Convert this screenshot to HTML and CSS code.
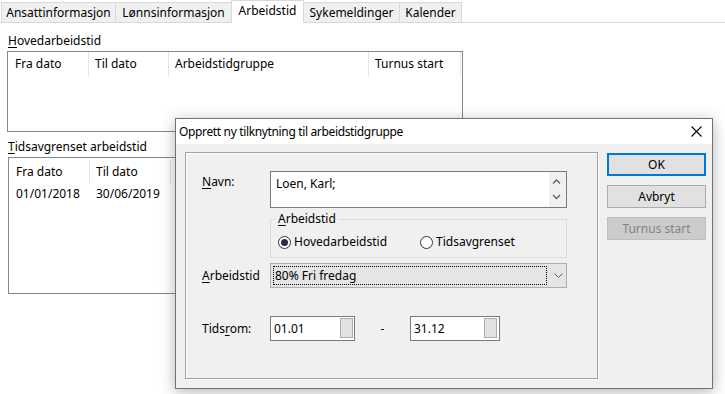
FILE: index.html
```html
<!DOCTYPE html>
<html lang="no">
<head>
  <meta charset="UTF-8">
  <title>Arbeidstid</title>
  <link rel="stylesheet" href="styles.css">
</head>
<body>
  <div class="tabs">
    <div class="tab tab-ansatt">Ansattinformasjon</div>
    <div class="tab tab-lonn">Lønnsinformasjon</div>
    <div class="tab tab-arbeidstid active">Arbeidstid</div>
    <div class="tab tab-syke">Sykemeldinger</div>
    <div class="tab tab-kalender">Kalender</div>
  </div>

  <div class="page">
    <div class="section-label"><u>H</u>ovedarbeidstid</div>
    <div class="listview listview-main">
      <div class="lv-header">
        <div class="lv-col col-fra">Fra dato</div>
        <div class="lv-col col-til">Til dato</div>
        <div class="lv-col col-gruppe">Arbeidstidgruppe</div>
        <div class="lv-col col-turnus">Turnus start</div>
      </div>
    </div>

    <div class="section-label section-label-limited"><u>T</u>idsavgrenset arbeidstid</div>
    <div class="listview listview-limited">
      <div class="lv-header">
        <div class="lv-col col-fra">Fra dato</div>
        <div class="lv-col col-til">Til dato</div>
        <div class="lv-col col-gruppe">Arbeidstidgruppe</div>
        <div class="lv-col col-turnus">Turnus start</div>
      </div>
      <div class="lv-row">
        <div class="lv-cell col-fra">01/01/2018</div>
        <div class="lv-cell col-til">30/06/2019</div>
      </div>
    </div>
  </div>

  <div class="dialog">
    <div class="dialog-title">
      <span class="dialog-caption">Opprett ny tilknytning til arbeidstidgruppe</span>
      <svg class="close-icon" width="11" height="11" viewBox="0 0 11 11">
        <path d="M0.5 0.5 L10.5 10.5 M10.5 0.5 L0.5 10.5" stroke="#000" stroke-width="1.1" fill="none"/>
      </svg>
    </div>

    <div class="dialog-body">
      <div class="panel">
        <div class="form-row">
          <div class="form-label label-top"><u>N</u>avn:</div>
          <div class="name-box">
            <div class="name-text">Loen, Karl;</div>
            <svg class="scrollbar" width="17" height="35" viewBox="0 0 17 35">
              <path d="M4 11.5 L7.5 8 L11 11.5" stroke="#606060" stroke-width="1.3" fill="none"/>
              <path d="M4 23 L7.5 26.5 L11 23" stroke="#606060" stroke-width="1.3" fill="none"/>
            </svg>
          </div>
        </div>

        <fieldset class="worktime-group">
          <legend><u>A</u>rbeidstid</legend>
          <div class="radio-row">
            <div class="radio radio-first"><span class="radio-dot checked"></span>Hovedarbeidstid</div>
            <div class="radio"><span class="radio-dot"></span>Tidsavgrenset</div>
          </div>
        </fieldset>

        <div class="form-row row-combo">
          <div class="form-label"><u>A</u>rbeidstid</div>
          <div class="combo">
            <div class="combo-focus">80% Fri fredag</div>
            <svg class="combo-arrow" width="9" height="5" viewBox="0 0 9 5">
              <path d="M0.5 0.5 L4.5 4.5 L8.5 0.5" stroke="#606060" stroke-width="1" fill="none"/>
            </svg>
          </div>
        </div>

        <div class="form-row row-period">
          <div class="form-label">Tids<u>r</u>om:</div>
          <div class="date-field date-from">
            <span>01.01</span>
            <span class="spin"></span>
          </div>
          <div class="date-dash">-</div>
          <div class="date-field date-to">
            <span>31.12</span>
            <span class="spin"></span>
          </div>
        </div>
      </div>

      <div class="buttons">
        <div class="btn btn-default">OK</div>
        <div class="btn">Avbryt</div>
        <div class="btn btn-disabled">Turnus start</div>
      </div>
    </div>
  </div>
</body>
</html>
```

FILE: styles.css
```css
/* Reset and base styles */
* {
  box-sizing: border-box;
  margin: 0;
  padding: 0;
}

body {
  position: relative;
  width: 725px;
  height: 394px;
  overflow: hidden;
  font-family: "Noto Sans", "Open Sans", sans-serif;
  font-size: 12px;
  line-height: 16px;
  color: #000;
  background-color: #fff;
}

u {
  text-underline-offset: 2px;
}

/* Tabs */
.tabs {
  display: flex;
  align-items: flex-end;
  height: 23px;
  padding-left: 1px;
  border-bottom: 1px solid #d9d9d9;
}

.tab {
  height: 20px;
  padding-top: 2px;
  margin-right: -1px;
  text-align: center;
  background-color: #f0f0f0;
  border: 1px solid #d9d9d9;
  border-bottom: none;
}

.tab.active {
  height: 23px;
  margin-bottom: -1px;
  background-color: #fff;
}

.tab-ansatt { width: 115px; }
.tab-lonn { width: 117px; }
.tab-arbeidstid { width: 73px; }
.tab-syke { width: 97px; }
.tab-kalender { width: 63px; }

/* Lists */
.page {
  padding: 10px 0 0 7px;
}

.section-label {
  height: 16px;
  margin-bottom: 2px;
  padding-left: 1px;
}

.section-label-limited {
  margin-top: 7px;
}

.listview {
  width: 456px;
  background-color: #fff;
  border: 1px solid #828790;
}

.listview-main {
  height: 81px;
}

.listview-limited {
  height: 137px;
  margin-left: 1px;
}

.lv-header,
.lv-row {
  display: flex;
}

.lv-header {
  height: 24px;
  line-height: 24px;
}

.listview-limited .lv-header {
  margin-top: 2px;
}

.lv-row {
  margin-top: 2px;
  height: 16px;
}

.lv-col,
.lv-cell {
  padding-left: 6px;
  white-space: nowrap;
}

.lv-col {
  border-right: 1px solid #e5e5e5;
}

.col-fra { width: 81px; padding-left: 7px; }
.col-til { width: 80px; }
.col-gruppe { width: 200px; }
.col-turnus { width: 92px; }

.listview-limited .col-til { width: 81px; }

/* Dialog */
.dialog {
  position: absolute;
  left: 175px;
  top: 118px;
  width: 538px;
  height: 271px;
  display: flex;
  flex-direction: column;
  background-color: #f0f0f0;
  border: 1px solid #727272;
  box-shadow: 0 3px 14px rgba(0, 0, 0, 0.3);
}

.dialog-title {
  display: flex;
  align-items: center;
  justify-content: space-between;
  height: 25px;
  padding: 0 10px 0 3px;
  background-color: #fff;
}

.dialog-caption {
  letter-spacing: -0.35px;
}

.dialog-body {
  display: flex;
  padding: 8px 0 0 9px;
}

.panel {
  width: 413px;
  height: 227px;
  padding: 18px 0 0 16px;
  border: 1px solid #a0a0a0;
  box-shadow: inset 1px 1px 0 #fff, 1px 1px 0 #fff;
}

.form-row {
  display: flex;
  align-items: center;
}

.form-row:first-child {
  align-items: flex-start;
}

.form-label {
  width: 68px;
}

.label-top {
  padding-top: 3px;
}

.name-box {
  display: flex;
  justify-content: space-between;
  width: 297px;
  height: 37px;
  background-color: #fff;
  border: 1px solid #7a7a7a;
}

.name-text {
  padding: 4px 0 0 5px;
}

.scrollbar {
  background-color: #f0f0f0;
}

/* Group box */
.worktime-group {
  width: 297px;
  height: 46px;
  margin: 4px 0 0 68px;
  padding: 0 0 0 7px;
  border: 1px solid #dcdcdc;
}

.worktime-group legend {
  line-height: 14px;
  padding: 0 2px;
  margin-left: -2px;
}

.radio-row {
  display: flex;
  margin-top: 8px;
}

.radio {
  display: flex;
  align-items: center;
}

.radio-first {
  width: 142px;
}

.radio-dot {
  display: flex;
  align-items: center;
  justify-content: center;
  width: 13px;
  height: 13px;
  margin-right: 3px;
  background-color: #fff;
  border: 1px solid #333;
  border-radius: 50%;
}

.radio-dot.checked::after {
  content: "";
  width: 7px;
  height: 7px;
  border-radius: 50%;
  background-color: #2b2b45;
}

/* Combo */
.row-combo {
  margin-top: 5px;
}

.combo {
  display: flex;
  align-items: center;
  width: 297px;
  height: 25px;
  padding: 1px;
  background-color: #e5e5e5;
  border: 1px solid #adadad;
}

.combo-focus {
  width: 274px;
  height: 19px;
  margin-left: 1px;
  padding-left: 1px;
  line-height: 17px;
  border: 1px dotted #000;
}

.combo-arrow {
  margin-left: 7px;
}

/* Period */
.row-period {
  margin-top: 28px;
}

.date-field {
  display: flex;
  justify-content: space-between;
  height: 25px;
  padding: 1px 1px 1px 3px;
  line-height: 21px;
  background-color: #fff;
  border: 1px solid #7a7a7a;
}

.date-from { width: 85px; }
.date-to { width: 90px; padding-right: 2px; }

.spin {
  width: 13px;
  height: 20px;
  background-color: #e1e1e1;
  border: 1px solid #adadad;
}

.date-dash {
  width: 55px;
  text-align: center;
  line-height: 21px;
}

/* Buttons */
.buttons {
  display: flex;
  flex-direction: column;
  gap: 9px;
  margin: 1px 0 0 9px;
}

.btn {
  width: 99px;
  height: 23px;
  line-height: 21px;
  text-align: center;
  background-color: #e1e1e1;
  border: 1px solid #adadad;
}

.btn-default {
  line-height: 19px;
  border: 2px solid #0078d7;
}

.btn-disabled {
  color: #838383;
  background-color: #cccccc;
  border-color: #bfbfbf;
}
```
